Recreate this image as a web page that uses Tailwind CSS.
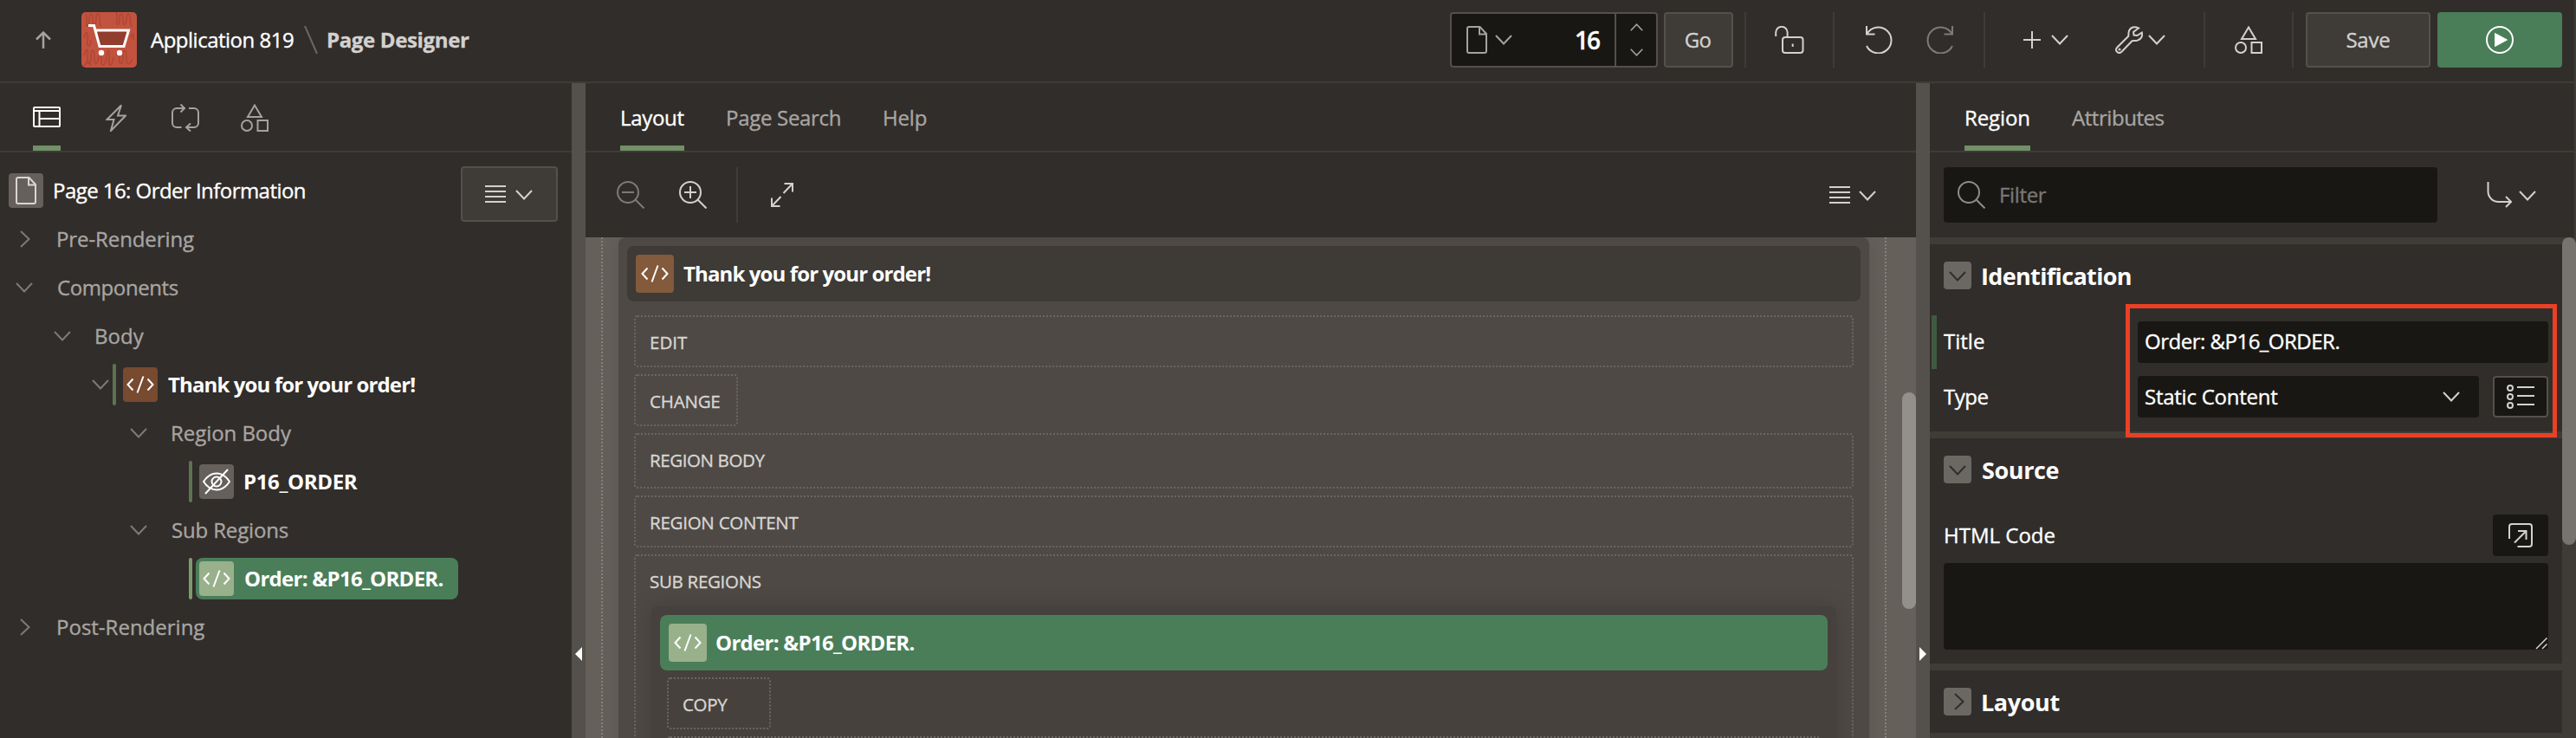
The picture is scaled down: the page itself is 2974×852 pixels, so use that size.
<!DOCTYPE html>
<html lang="en">
<head>
<meta charset="utf-8">
<title>Page Designer</title>
<script src="https://cdn.jsdelivr.net/npm/@tailwindcss/browser@4"></script>
</head>
<body class="w-[2974px] h-[852px] overflow-hidden bg-[#312d2a] text-white text-[24px] leading-[32px] [-webkit-text-stroke:0.35px_currentColor] whitespace-nowrap font-['Open_Sans',sans-serif]">
<svg width="0" height="0" class="absolute" fill="none" stroke="currentColor" stroke-width="2">
  <symbol id="down" viewBox="0 0 20 12"><path d="M1 1l9 9.500 9-9.500" fill="none" stroke="currentColor" stroke-width="2"/></symbol>
  <symbol id="right" viewBox="0 0 12 20"><path d="M1 1l9.500 9-9.500 9" fill="none" stroke="currentColor" stroke-width="2"/></symbol>
  <symbol id="lines" viewBox="0 0 24 20"><path d="M0 1h24M0 7h24M0 13h24M0 19h24" fill="none" stroke="currentColor" stroke-width="2"/></symbol>
  <symbol id="code" viewBox="0 0 32 20"><path d="M7.500 3.500L1.500 10l6 6.500M19.500 0.500l-7 19M24.500 3.500l6 6.500-6 6.500" fill="none" stroke="currentColor" stroke-width="2"/></symbol>
  <symbol id="file" viewBox="0 0 24 32"><path d="M3 1h12.500L23 9v20a2 2 0 0 1-2 2H3a2 2 0 0 1-2-2V3a2 2 0 0 1 2-2zM15 1v8.500h8" fill="none" stroke="currentColor" stroke-width="2"/></symbol>
  <symbol id="shapes" viewBox="0 0 32 32"><path d="M16 1.500L24 15H8zM19.500 19H31v12H19.500z" fill="none" stroke="currentColor" stroke-width="2"/><circle cx="7" cy="25" r="6" fill="none" stroke="currentColor" stroke-width="2"/></symbol>
</svg>

<!-- Application header -->
<header class="h-24 flex items-center border-b-2 border-r-2 border-[#3f3b37] pb-[2px]">
  <svg class="ml-[41px] w-[18px] h-5 text-[#a5a29f]" viewBox="0 0 18 20" fill="none" stroke="currentColor" stroke-width="2.500"><path d="M9 20V1.500M1 9.500l8-8 8 8"/></svg>
  <svg class="ml-[35px] w-16 h-16" viewBox="0 0 64 64" fill="none">
    <rect width="64" height="64" rx="5" fill="#c2533f"/>
    <path d="M5 2c4 9-2 14 2 14s0-14 4-14 0 14 4 12 0-12 4-12 1 16 4 14M40 0c4 9-2 14 2 14s0-12 4-12 0 14 4 12 0-12 4-12 1 16 5 14M3 30c3-10 5-8 4 2s3 10 4 0M3 50c3-10 5-8 4 2s4 10 4 0 4-10 4 0 3 10 5 0 4-8 3 2 4 10 6-2 4-8 3 2 3 10 5-2M40 50c3-10 5-8 4 2s4 10 4 0 4-10 4 0 3 10 7 2M3 62c4-6 6-6 8 0M57 30c2-8 4-6 3 2" stroke="#ae4634" stroke-width="1.500"/>
    <path d="M16.500 21.500H54.500L49.500 38.500H21z" fill="#923d2e"/>
    <path d="M8 15.500h6.500l6.500 24h28l5.500-18.500H17" stroke="#fff" stroke-width="3"/>
    <circle cx="23" cy="47" r="3.200" fill="#fff"/><circle cx="44" cy="47" r="3.200" fill="#fff"/>
  </svg>
  <span class="ml-4 w-[167px] tracking-[-0.5px]">Application 819</span>
  <svg class="ml-[10px] w-4 h-8 text-[#6b6764]" viewBox="0 0 16 32" stroke="currentColor" stroke-width="2"><path d="M1 0l14 32"/></svg>
  <span class="ml-[10px] font-bold tracking-[-0.35px] text-[#d3d1cf]">Page Designer</span>

  <div class="ml-auto flex items-center">
    <div class="flex w-[240px] h-16 border-2 border-[#54504b] rounded bg-[#191714]">
      <div class="w-[188px] flex items-center text-[#a5a29f]">
        <svg class="ml-[17px] w-6 h-8"><use href="#file"/></svg>
        <svg class="ml-[9px] w-5 h-3"><use href="#down"/></svg>
        <span class="ml-auto mr-[18px] text-[28px] tracking-[-2px] font-semibold text-white">16</span>
      </div>
      <div class="flex-1 border-l-2 border-[#54504b] flex flex-col items-center justify-between py-[11px] text-[#a5a29f]">
        <svg class="w-[15px] h-[9px] rotate-180"><use href="#down"/></svg>
        <svg class="w-[15px] h-[9px]"><use href="#down"/></svg>
      </div>
    </div>
    <div class="ml-[7px] w-20 h-16 border-2 border-[#54504b] rounded bg-[#3f3b37] flex items-center justify-center text-[#d3d1cf] tracking-[-0.8px] pr-[2px]">Go</div>
    <div class="ml-[13px] w-[2px] h-16 bg-[#3f3b37]"></div>
    <svg class="ml-[33px] w-[34px] h-8 text-[#d3d1cf]" viewBox="0 0 34 32" fill="none" stroke="currentColor" stroke-width="2"><path d="M1.200 12V7.500a6.700 6.700 0 0 1 13.400 0V12"/><rect x="9" y="13" width="23.500" height="18" rx="3"/><path d="M20.700 20.500v3.500"/></svg>
    <div class="ml-[33px] w-[2px] h-16 bg-[#3f3b37]"></div>
    <svg class="ml-[36px] w-8 h-8 text-[#d3d1cf]" viewBox="0 0 32 32" fill="none" stroke="currentColor" stroke-width="2"><path d="M1 0v9.500h9.500M1.500 9A15 15 0 1 1 1 23"/></svg>
    <svg class="ml-[37px] w-8 h-8 text-[#7d7a77]" viewBox="0 0 32 32" fill="none" stroke="currentColor" stroke-width="2"><path d="M31 0v9.500h-9.500M30.500 9A15 15 0 1 0 31 23"/></svg>
    <div class="ml-[35px] w-[2px] h-16 bg-[#3f3b37]"></div>
    <svg class="ml-11 w-5 h-5 text-[#d3d1cf]" viewBox="0 0 20 20" stroke="currentColor" stroke-width="2"><path d="M10 0v20M0 10h20"/></svg>
    <svg class="ml-3 w-5 h-3 text-[#d3d1cf]"><use href="#down"/></svg>
    <svg class="ml-[54px] w-8 h-8 text-[#d3d1cf]" viewBox="0 0 32 32" fill="none" stroke="currentColor" stroke-width="2"><path d="M27 2.500C22.500 0.300 18 1 16 5.500c-.9 2.500-.5 4-.7 6.200L2 25c-1.500 2-.8 4 .3 5s3.200 1.500 4.900 0l12.300-12.800c2-.4 4 .2 6.200-.6 4.600-1.900 6.100-5 5.100-9.100L25.500 11l-4-.500-.5-3.500z"/><circle cx="5" cy="27" r=".6"/></svg>
    <svg class="ml-[6px] w-5 h-3 text-[#d3d1cf]"><use href="#down"/></svg>
    <div class="ml-[44px] w-[2px] h-16 bg-[#3f3b37]"></div>
    <svg class="ml-[34px] w-8 h-8 text-[#d3d1cf]"><use href="#shapes"/></svg>
    <div class="ml-[34px] w-[2px] h-16 bg-[#3f3b37]"></div>
    <div class="ml-[14px] w-36 h-16 border-2 border-[#54504b] rounded bg-[#3f3b37] flex items-center justify-center text-[#d3d1cf] tracking-[-0.2px]">Save</div>
    <div class="ml-2 mr-[14px] w-36 h-16 rounded bg-[#4a7e59] flex items-center justify-center">
      <svg class="w-8 h-8" viewBox="0 0 32 32" fill="none"><circle cx="16" cy="16" r="15" stroke="#fff" stroke-width="2"/><path d="M10.500 8.500v15L24.500 16z" fill="#fff" stroke="#fff" stroke-linejoin="round"/></svg>
    </div>
  </div>
</header>

<main class="flex h-[756px]">
  <!-- Rendering tree -->
  <aside class="w-[660px]">
    <div class="h-20 border-b-2 border-[#3f3b37] flex pl-[38px] text-[#a5a29f]">
      <div class="w-8 flex items-center border-b-6 border-[#719066] pt-[6px] text-white">
        <svg class="w-8 h-6" viewBox="0 0 32 24" fill="none" stroke="currentColor" stroke-width="2"><rect x="1" y="1" width="30" height="22" rx="1"/><path d="M1 5h30M7.500 5v18M7.500 14H31"/></svg>
      </div>
      <svg class="ml-[52px] mt-6 w-6 h-8" viewBox="0 0 24 32" fill="none" stroke="currentColor" stroke-width="2"><path d="M18 1.500L1.500 18h8L6 31l17-17.500h-9z"/></svg>
      <svg class="ml-[52px] mt-6 w-8 h-8" viewBox="0 0 32 32" fill="none" stroke="currentColor" stroke-width="2"><path d="M15 5H6a5 5 0 0 0-5 5v12a5 5 0 0 0 5 5h5.500M20 5h6a5 5 0 0 1 5 5v12a5 5 0 0 1-5 5h-9M10.500 .5L15 5l-4.500 4.500M22 22.500L17 27l5 4.500"/></svg>
      <svg class="ml-12 mt-6 w-8 h-8"><use href="#shapes"/></svg>
    </div>
    <div class="h-4"></div>
    <div class="h-14 flex pl-[10px] pr-4">
      <div class="mt-2 w-10 h-10 rounded bg-[#66605c] flex items-center justify-center text-[#d8d6d4]"><svg class="w-6 h-8"><use href="#file"/></svg></div>
      <span class="ml-[11px] pt-3 tracking-[-0.55px]">Page 16: Order Information</span>
      <div class="ml-auto w-28 h-16 border-2 border-[#54504b] rounded bg-[#3f3b37] flex items-center pl-[26px] gap-[11px] text-[#d3d1cf]">
        <svg class="w-6 h-5"><use href="#lines"/></svg><svg class="w-5 h-3 mt-[2px]"><use href="#down"/></svg>
      </div>
    </div>
    <div class="h-14 flex items-center pl-[23px] text-[#a8a5a2]"><svg class="w-3 h-5 text-[#7d7a77]"><use href="#right"/></svg><span class="ml-[30px] tracking-[-0.1px]">Pre-Rendering</span></div>
    <div class="h-14 flex items-center pl-[18px] text-[#a8a5a2]"><svg class="w-5 h-3 text-[#7d7a77]"><use href="#down"/></svg><span class="ml-[28px] tracking-[-0.4px]">Components</span></div>
    <div class="h-14 flex items-center pl-[62px] text-[#a8a5a2]"><svg class="w-5 h-3 text-[#7d7a77]"><use href="#down"/></svg><span class="ml-[27px]">Body</span></div>
    <div class="h-14 flex items-center pl-[106px] font-bold"><svg class="w-5 h-3 text-[#7d7a77]"><use href="#down"/></svg>
      <div class="ml-1 w-1 h-12 rounded-full bg-[#5c7352]"></div>
      <div class="ml-2 w-10 h-10 rounded bg-[#784a30] flex items-center justify-center"><svg class="w-8 h-5"><use href="#code"/></svg></div>
      <span class="ml-3 tracking-[-0.88px] [-webkit-text-stroke:0]">Thank you for your order!</span></div>
    <div class="h-14 flex items-center pl-[150px] text-[#a8a5a2]"><svg class="w-5 h-3 text-[#7d7a77]"><use href="#down"/></svg><span class="ml-[27px] tracking-[-0.05px]">Region Body</span></div>
    <div class="h-14 flex items-center pl-[218px] font-bold">
      <div class="w-1 h-12 rounded-full bg-[#5c7352]"></div>
      <div class="ml-2 w-10 h-10 rounded bg-[#66605c] flex items-center justify-center"><svg class="w-8 h-8" viewBox="0 0 32 32" fill="none" stroke="currentColor" stroke-width="2"><path d="M1 16C5 10 10 6.500 16 6.500S27 10 31 16c-4 6-9 9.500-15 9.500S5 22 1 16z"/><circle cx="16" cy="16" r="5.500"/><path d="M29 2L3 30"/></svg></div>
      <span class="ml-[11px] tracking-[-0.35px] [-webkit-text-stroke:0]">P16_ORDER</span></div>
    <div class="h-14 flex items-center pl-[150px] text-[#a8a5a2]"><svg class="w-5 h-3 text-[#7d7a77]"><use href="#down"/></svg><span class="ml-[28px] tracking-[-0.15px]">Sub Regions</span></div>
    <div class="h-14 flex items-center pl-[218px] font-bold">
      <div class="w-1 h-12 rounded-full bg-[#7c9c6c]"></div>
      <div class="ml-1 w-[303px] h-12 rounded-lg bg-[#4a7e59] flex items-center pl-1">
        <div class="w-10 h-10 rounded bg-[#98b18b] flex items-center justify-center"><svg class="w-8 h-5"><use href="#code"/></svg></div>
        <span class="ml-3 tracking-[-0.72px] [-webkit-text-stroke:0]">Order: &amp;P16_ORDER.</span></div></div>
    <div class="h-14 flex items-center pl-[23px] text-[#a8a5a2]"><svg class="w-3 h-5 text-[#7d7a77]"><use href="#right"/></svg><span class="ml-[30px]">Post-Rendering</span></div>
  </aside>

  <div class="w-4 bg-[#54504b] pt-[651px] pl-1"><svg class="w-2 h-4" viewBox="0 0 8 16"><path d="M8 0v16L0 8z" fill="#fff"/></svg></div>

  <!-- Layout canvas -->
  <section class="w-[1536px] flex flex-col">
    <div class="h-20 shrink-0 border-b-2 border-[#3f3b37] flex pl-10 text-[#a8a5a2]">
      <div class="w-[74px] border-b-6 border-[#719066] text-white pt-6 tracking-[-0.3px]">Layout</div>
      <span class="ml-12 w-[133px] pt-6 tracking-[-0.3px]">Page Search</span>
      <span class="ml-[48px] pt-6 tracking-[-0.2px]">Help</span>
    </div>
    <div class="h-[98px] shrink-0 flex items-center pl-9 text-[#d3d1cf]">
      <svg class="w-8 h-8 text-[#7d7a77]" viewBox="0 0 32 32" fill="none" stroke="currentColor" stroke-width="2"><circle cx="13" cy="13" r="12"/><path d="M6 13h14M21.500 21.500L31.500 31.500"/></svg>
      <svg class="ml-10 w-8 h-8" viewBox="0 0 32 32" fill="none" stroke="currentColor" stroke-width="2"><circle cx="13" cy="13" r="12"/><path d="M6 13h14M13 6v14M21.500 21.500L31.500 31.500"/></svg>
      <div class="ml-[34px] w-[2px] h-16 bg-[#3f3b37]"></div>
      <svg class="ml-[38px] w-[26px] h-7" viewBox="0 0 26 28" fill="none" stroke="currentColor" stroke-width="2"><path d="M15.500 1H25v9.500M25 1L14.500 12M1 17.500V27h9.500M1 27l10.500-11"/></svg>
      <svg class="ml-auto w-6 h-5"><use href="#lines"/></svg><svg class="ml-[10px] mr-[46px] w-5 h-3 mt-[2px]"><use href="#down"/></svg>
    </div>
    <div class="flex-1 min-h-0 overflow-hidden flex bg-[#66605b]">
      <div class="w-5 border-r-2 border-dotted border-[#86817c]"></div>
      <div class="ml-[18px] w-[1444px] h-[640px] shrink-0 rounded-t-lg bg-[#4e4944] shadow-[0_0_24px_rgba(0,0,0,0.13)] p-[10px] text-[20.5px] text-[#d8d6d4]">
        <div class="h-16 rounded-lg bg-[#3e3a36] flex items-center pl-[10px] text-[24px] font-bold text-white">
          <div class="w-11 h-11 rounded bg-[#835a3c] flex items-center justify-center"><svg class="w-8 h-5"><use href="#code"/></svg></div>
          <span class="ml-[11px] tracking-[-0.88px] [-webkit-text-stroke:0]">Thank you for your order!</span>
        </div>
        <div class="mt-4 mx-2 flex flex-col gap-2">
          <div class="h-[60px] border-2 border-dotted border-[#6b6661] rounded pl-4 pt-[13px]">EDIT</div>
          <div class="h-[60px] w-[120px] border-2 border-dotted border-[#6b6661] rounded pl-4 pt-[13px] tracking-[-0.2px]">CHANGE</div>
          <div class="h-16 border-2 border-dotted border-[#6b6661] rounded pl-4 pt-[13px] tracking-[-0.4px]">REGION BODY</div>
          <div class="h-[60px] border-2 border-dotted border-[#6b6661] rounded pl-4 pt-[13px] tracking-[-0.25px]">REGION CONTENT</div>
          <div class="h-[300px] border-2 border-dotted border-[#6b6661] rounded pt-[13px]">
            <div class="pl-4 tracking-[-0.3px]">SUB REGIONS</div>
            <div class="mt-[13px] mx-[18px] h-[260px] rounded-lg bg-[#46413d] shadow-[0_0_24px_rgba(0,0,0,0.15)] p-[10px]">
              <div class="h-16 rounded-lg bg-[#4a7e59] flex items-center pl-[10px] text-[24px] font-bold text-white">
                <div class="w-11 h-11 rounded bg-[#98b18b] flex items-center justify-center"><svg class="w-8 h-5"><use href="#code"/></svg></div>
                <span class="ml-[10px] tracking-[-0.72px] [-webkit-text-stroke:0]">Order: &amp;P16_ORDER.</span>
              </div>
              <div class="mt-2 mx-2 h-[60px] w-[120px] border-2 border-dotted border-[#6b6661] rounded pl-4 pt-[13px] tracking-[-0.3px]">COPY</div>
              <div class="mt-2 mx-2 h-[60px] border-2 border-dotted border-[#6b6661] rounded"></div>
            </div>
          </div>
        </div>
      </div>
      <div class="w-5 border-r-2 border-dotted border-[#86817c]"></div>
      <div class="ml-[18px] mt-[179px] w-4 h-[250px] rounded-full bg-[#93908c]"></div>
    </div>
  </section>

  <div class="w-4 bg-[#54504b] pt-[651px] pl-1"><svg class="w-2 h-4" viewBox="0 0 8 16"><path d="M0 0v16l8-8z" fill="#fff"/></svg></div>

  <!-- Property editor -->
  <section class="w-[746px] relative flex flex-col">
    <div class="border-r-2 border-[#3f3b37] h-[178px] shrink-0">
      <div class="h-20 border-b-2 border-[#3f3b37] flex pl-10">
        <div class="w-[76px] border-b-6 border-[#719066] pt-6 tracking-[-0.1px]">Region</div>
        <span class="ml-12 pt-6 tracking-[-0.45px] text-[#a8a5a2]">Attributes</span>
      </div>
      <div class="h-[98px] flex items-center pl-4">
        <div class="w-[570px] h-16 rounded bg-[#191714] flex items-center pl-4 text-[#7a7774]">
          <svg class="w-8 h-8 text-[#8e8b88]" viewBox="0 0 32 32" fill="none" stroke="currentColor" stroke-width="2"><circle cx="13" cy="13" r="12"/><path d="M21.500 21.500L31.500 31.500"/></svg>
          <span class="ml-4 -mt-px tracking-[-0.35px]">Filter</span>
        </div>
        <svg class="ml-[57px] w-[29px] h-[30px] text-[#d3d1cf]" viewBox="0 0 29 30" fill="none" stroke="currentColor" stroke-width="2"><path d="M1.500 0v11a12 12 0 0 0 12 12H28M22 17l6 6-6 6"/></svg>
        <svg class="ml-2 w-5 h-3 mt-[2px] text-[#d3d1cf]"><use href="#down"/></svg>
      </div>
    </div>
    <div class="flex-1 min-h-0 flex">
      <div class="w-[730px] flex flex-col">
        <div class="h-[232px] shrink-0 border-t-8 border-b-8 border-[#3f3b37]">
          <div class="h-[72px] flex items-center pl-4 text-[27px] font-bold"><div class="w-8 h-8 rounded bg-[#6b6762] flex items-center justify-center text-[#312d2a]"><svg class="w-5 h-3 mt-[2px]"><use href="#down"/></svg></div><span class="ml-[11px] mt-px tracking-[-0.65px] [-webkit-text-stroke:0]">Identification</span></div>
          <div class="mt-[10px] h-[62px] flex items-center pl-[2px]">
            <div class="w-[6px] h-[62px] bg-[#3f5a41]"></div>
            <span class="ml-2 -mt-[2px] w-[224px]">Title</span>
            <div class="w-[474px] h-12 rounded bg-[#191714] flex items-center pl-2 pb-[2px] tracking-[-0.5px]">Order: &amp;P16_ORDER.</div>
          </div>
          <div class="mt-2 h-12 flex items-center pl-4">
            <span class="w-[224px] tracking-[-0.5px]">Type</span>
            <div class="w-[394px] h-12 rounded bg-[#191714] flex items-center justify-between pl-2 pr-[22px] tracking-[-0.25px]">Static Content<svg class="w-5 h-3 text-[#d3d1cf]"><use href="#down"/></svg></div>
            <div class="ml-4 w-16 h-12 rounded border-2 border-[#54504b] bg-[#191714] flex items-center justify-center"><svg class="w-8 h-7 text-[#d3d1cf]" viewBox="0 0 32 28" fill="none" stroke="currentColor" stroke-width="2"><circle cx="4" cy="4" r="3"/><circle cx="4" cy="14" r="3"/><circle cx="4" cy="24" r="3"/><path d="M12 3h20M12 13h20M12 23h20"/></svg></div>
          </div>
        </div>
        <div class="h-[268px] shrink-0 border-b-8 border-[#3f3b37] px-4">
          <div class="h-[72px] flex items-center text-[27px] font-bold"><div class="w-8 h-8 rounded bg-[#6b6762] flex items-center justify-center text-[#312d2a]"><svg class="w-5 h-3 mt-[2px]"><use href="#down"/></svg></div><span class="ml-[12px] mt-px tracking-[-0.4px] [-webkit-text-stroke:0]">Source</span></div>
          <div class="mt-4 h-12 flex items-center justify-between">
            <span>HTML Code</span>
            <div class="w-16 h-12 rounded bg-[#191714] flex items-center justify-center"><svg class="w-7 h-7 text-[#d3d1cf]" viewBox="0 0 28 28" fill="none" stroke="currentColor" stroke-width="2"><path d="M1 18V4a3 3 0 0 1 3-3h20a3 3 0 0 1 3 3v20a3 3 0 0 1-3 3H10.500M11 9h9.500v10M20.500 9L7 22.500"/></svg></div>
          </div>
          <div class="mt-2 h-[100px] rounded bg-[#191714] flex items-end justify-end"><svg class="w-4 h-4" viewBox="0 0 16 16" stroke="#d3d1cf" stroke-width="1.500"><path d="M2 15L14.500 2.500M9 15l5.500-5.500"/></svg></div>
        </div>
        <div class="h-[80px] shrink-0 border-b-8 border-[#3f3b37] flex items-center pl-4 text-[27px] font-bold"><div class="w-8 h-8 rounded bg-[#6b6762] flex items-center justify-center text-[#312d2a]"><svg class="w-3 h-5 ml-1"><use href="#right"/></svg></div><span class="ml-[11px] mt-px tracking-[-0.4px] [-webkit-text-stroke:0]">Layout</span></div>
      </div>
      <div class="w-4 bg-[#3f3b37]"><div class="h-[355px] rounded-full bg-[#777470]"></div></div>
    </div>
    <!-- highlight frame over the Title and Type fields -->
    <div class="absolute left-[226px] top-[255px] w-[498px] h-[154px] border-5 border-[#ea4025]"></div>
  </section>
</main>
</body>
</html>
